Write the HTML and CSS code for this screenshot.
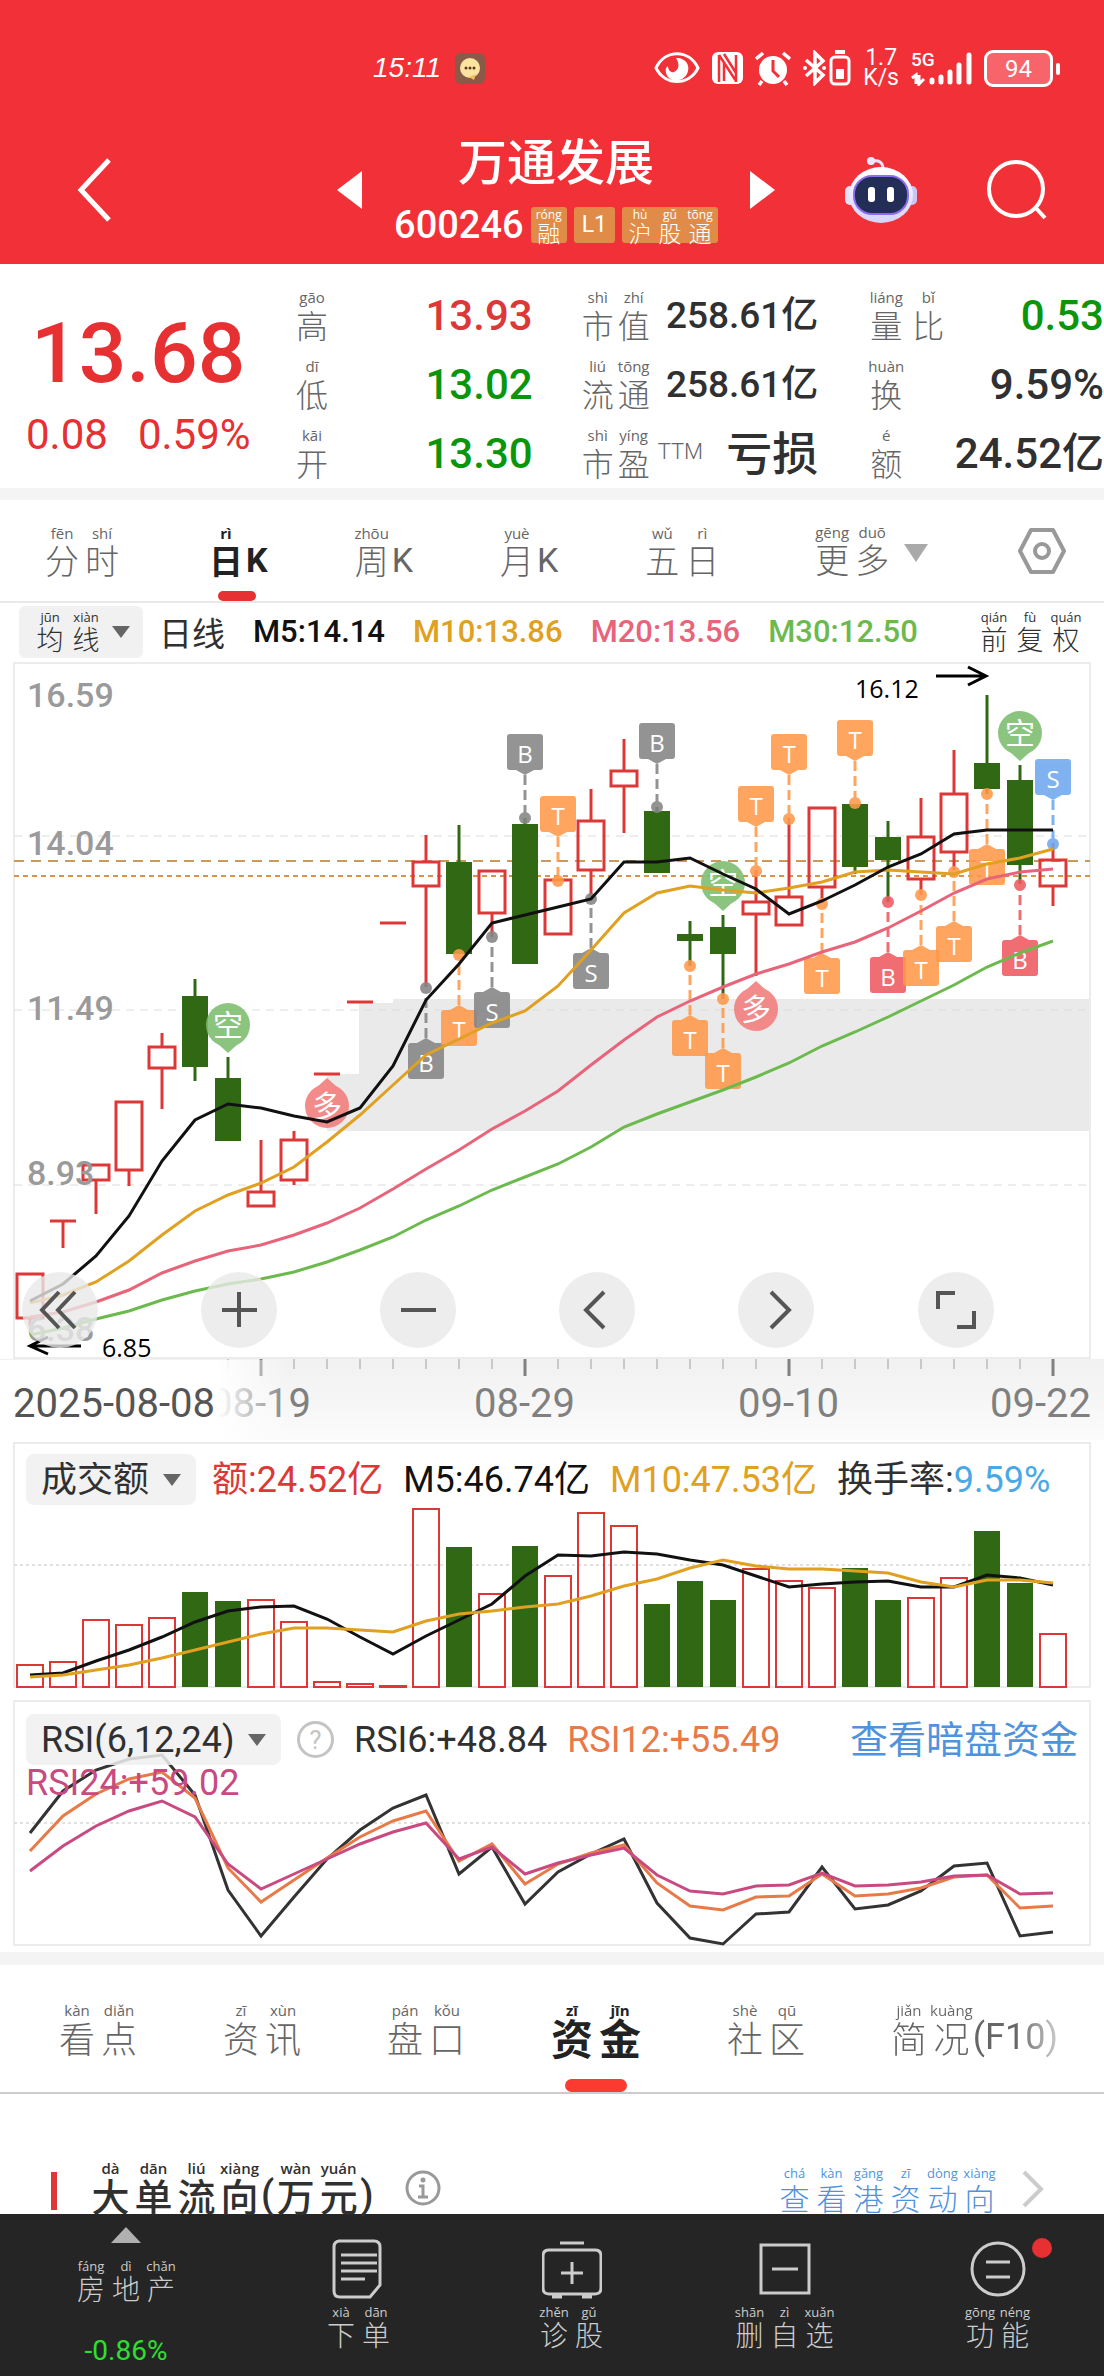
FILE: index.html
```html
<!DOCTYPE html>
<html lang="zh-CN">
<head>
    <meta charset="utf-8">
    <meta name="viewport" content="width=device-width, initial-scale=1">
    <title>万通发展 600246</title>
    <link rel="stylesheet" href="styles.css">
</head>
<body>
    <header class="top">
        <div class="status">
            <span class="time">15:11</span>
            <svg class="app-icon" width="30" height="31" viewBox="0 0 30 31">
                <rect width="30" height="31" rx="6" fill="#8a5a48"/>
                <circle cx="15" cy="15" r="10" fill="#fbe3a0"/>
                <path d="M14 24l7-3-2 6z" fill="#f0c060"/>
                <g fill="#5a3a20"><circle cx="11" cy="15" r="1.5"/><circle cx="15" cy="15" r="1.5"/><circle cx="19" cy="15" r="1.5"/></g>
            </svg>
            <div class="status-icons">
                <svg width="46" height="34" viewBox="0 0 46 34">
                    <path d="M2 17C11 -2 35 -2 44 17C35 35 11 35 2 17Z" fill="none" stroke="#fff" stroke-width="3"/>
                    <path d="M22 7c8-1 14 6 12 13-2 11-19 13-22 2-1-3 0-6 2-7 0 4 3 7 6 6 5-2 6-8 2-14z" fill="#fff"/>
                </svg>
                <svg width="31" height="34" viewBox="0 0 31 34">
                    <rect y="1" width="31" height="32" rx="6" fill="#fff"/>
                    <path d="M7 4v27M7 4l17 26M12 11v19M24 4v27M12 3l12 19" fill="none" stroke="#f23037" stroke-width="2.5"/>
                </svg>
                <svg width="36" height="35" viewBox="0 0 36 35">
                    <circle cx="18" cy="19" r="14" fill="#fff"/>
                    <path d="M1 8l7-6M28 2l7 6M7 30l-3 4M29 30l3 4" stroke="#fff" stroke-width="3.5" fill="none"/>
                    <path d="M18 9v11l6 6" stroke="#f23037" stroke-width="3" fill="none"/>
                </svg>
                <svg width="48" height="36" viewBox="0 0 48 36">
                    <path d="M3 10l17 15-8 8V3l8 8L3 26" fill="none" stroke="#fff" stroke-width="3.5"/>
                    <circle cx="2" cy="18" r="2" fill="#fff"/><circle cx="21" cy="18" r="2" fill="#fff"/>
                    <path d="M32 2h10" stroke="#fff" stroke-width="4"/>
                    <rect x="28" y="7" width="18" height="27" rx="4" fill="none" stroke="#fff" stroke-width="3"/>
                    <rect x="33" y="19" width="8" height="10" rx="1" fill="#fff"/>
                </svg>
                <span class="speed">1.7<br>K/s</span>
                <div class="signal">
                    <span>5G</span>
                    <svg width="61" height="36" viewBox="0 0 61 36">
                        <path d="M1 28l4-3v9M8 25v9l5-5" fill="none" stroke="#fff" stroke-width="3"/>
                        <path d="M21 30v2M30 27v5M39 22v10M48 15v17M58 5v27" stroke="#fff" stroke-width="5" stroke-linecap="round"/>
                    </svg>
                </div>
                <span class="battery">94</span>
            </div>
        </div>
        <div class="nav">
            <button class="icon-btn back" aria-label="返回">
                <svg width="35" height="66" viewBox="0 0 35 66"><path d="M32 3L4 33l28 30" fill="none" stroke="#fff" stroke-width="5"/></svg>
            </button>
            <div class="stock">
                <button class="icon-btn" aria-label="上一只"><svg width="25" height="38" viewBox="0 0 25 38"><path d="M25 0v38L0 19z" fill="#fff"/></svg></button>
                <div class="stock-name">
                    <h1>万通发展</h1>
                    <div class="stock-code">
                        <span>600246</span>
                        <span class="tag"><ruby>融<rt>róng</rt></ruby></span>
                        <span class="tag level">L1</span>
                        <span class="tag"><ruby>沪<rt>hù</rt></ruby><ruby>股<rt>gǔ</rt></ruby><ruby>通<rt>tōng</rt></ruby></span>
                    </div>
                </div>
                <button class="icon-btn" aria-label="下一只"><svg width="25" height="38" viewBox="0 0 25 38"><path d="M0 0v38L25 19z" fill="#fff"/></svg></button>
            </div>
            <button class="icon-btn" aria-label="智能助手">
                <svg width="72" height="68" viewBox="0 0 72 68">
                    <defs><linearGradient id="shell" x1="0" y1="0" x2="0" y2="1"><stop offset="0" stop-color="#fff"/><stop offset="1" stop-color="#d5d3fa"/></linearGradient></defs>
                    <path d="M27 5c7-1 11 1 11 8" fill="none" stroke="#e6e0fa" stroke-width="3"/>
                    <circle cx="26" cy="5" r="4" fill="#eee8fc"/>
                    <rect x="0" y="30" width="12" height="19" rx="5" fill="#e3e0fb"/>
                    <rect x="60" y="30" width="12" height="19" rx="5" fill="#c9c8f5"/>
                    <ellipse cx="36" cy="39" rx="32" ry="28" fill="url(#shell)"/>
                    <rect x="9" y="20" width="54" height="38" rx="18" fill="#222e55" stroke="#8a6cf0" stroke-width="2"/>
                    <rect x="23" y="31" width="7" height="15" rx="3" fill="#fff"/><rect x="42" y="31" width="7" height="15" rx="3" fill="#fff"/>
                </svg>
            </button>
            <button class="icon-btn" aria-label="搜索">
                <svg width="60" height="60" viewBox="0 0 60 60"><circle cx="29" cy="29" r="27" fill="none" stroke="#fff" stroke-width="4"/><path d="M48 47l10 11" stroke="#fff" stroke-width="4"/></svg>
            </button>
        </div>
    </header>

    <section class="quote">
        <div class="price">
            <strong>13.68</strong>
            <p><span>0.08</span><span>0.59%</span></p>
        </div>
        <dl>
            <div><dt><ruby>高<rt>gāo</rt></ruby></dt><dd class="up">13.93</dd></div>
            <div><dt><ruby>低<rt>dī</rt></ruby></dt><dd class="down">13.02</dd></div>
            <div><dt><ruby>开<rt>kāi</rt></ruby></dt><dd class="down">13.30</dd></div>
        </dl>
        <dl class="cap">
            <div><dt><ruby>市<rt>shì</rt></ruby><ruby>值<rt>zhí</rt></ruby></dt><dd>258.61亿</dd></div>
            <div><dt><ruby>流<rt>liú</rt></ruby><ruby>通<rt>tōng</rt></ruby></dt><dd>258.61亿</dd></div>
            <div><dt><ruby>市<rt>shì</rt></ruby><ruby>盈<rt>yíng</rt></ruby><sup>TTM</sup></dt><dd class="loss">亏损</dd></div>
        </dl>
        <dl class="turnover">
            <div><dt><ruby>量<rt>liáng</rt></ruby><ruby>比<rt>bǐ</rt></ruby></dt><dd class="down">0.53</dd></div>
            <div><dt><ruby>换<rt>huàn</rt></ruby></dt><dd>9.59%</dd></div>
            <div><dt><ruby>额<rt>é</rt></ruby></dt><dd>24.52亿</dd></div>
        </dl>
    </section>

    <nav class="periods">
        <div class="period-list">
            <button><ruby>分<rt>fēn</rt></ruby><ruby>时<rt>shí</rt></ruby></button>
            <button class="active"><ruby>日<rt>rì</rt></ruby>K</button>
            <button><ruby>周<rt>zhōu</rt></ruby>K</button>
            <button><ruby>月<rt>yuè</rt></ruby>K</button>
            <button><ruby>五<rt>wǔ</rt></ruby><ruby>日<rt>rì</rt></ruby></button>
        </div>
        <button class="more"><ruby>更<rt>gēng</rt></ruby><ruby>多<rt>duō</rt></ruby><i class="caret"></i></button>
        <button aria-label="设置">
            <svg width="48" height="48" viewBox="0 0 48 48" fill="none" stroke="#999" stroke-width="4"><path d="M13 3h22l11 21-11 21H13L2 24z" stroke-linejoin="round"/><circle cx="24" cy="24" r="7"/></svg>
        </button>
    </nav>

    <div class="averages">
        <button class="chip"><ruby>均<rt>jūn</rt></ruby><ruby>线<rt>xiàn</rt></ruby><i class="caret"></i></button>
        <span class="line-name">日线</span>
        <span class="black">M5:14.14</span>
        <span class="gold">M10:13.86</span>
        <span class="pink">M20:13.56</span>
        <span class="green">M30:12.50</span>
        <button class="adjust"><ruby>前<rt>qián</rt></ruby><ruby>复<rt>fù</rt></ruby><ruby>权<rt>quán</rt></ruby></button>
    </div>

    <section class="panel">
        <svg id="kline" viewBox="0 660 1104 780" role="img" aria-label="日K线图"></svg>
        <div class="tools">
            <button aria-label="最早"><svg viewBox="0 0 76 76"><path d="M37 20L20 38l17 18M53 20L36 38l17 18"/></svg></button>
            <button aria-label="放大"><svg viewBox="0 0 76 76"><path d="M21 38h35M38 20v35"/></svg></button>
            <button aria-label="缩小"><svg viewBox="0 0 76 76"><path d="M21 38h35"/></svg></button>
            <button aria-label="向左"><svg viewBox="0 0 76 76"><path d="M45 20L27 38l18 18"/></svg></button>
            <button aria-label="向右"><svg viewBox="0 0 76 76"><path d="M33 20l18 18-18 18"/></svg></button>
            <button aria-label="全屏"><svg viewBox="0 0 76 76"><path d="M20 37V21h17M56 39v16H39"/></svg></button>
        </div>
    </section>

    <section class="panel">
        <svg id="volume" viewBox="0 1440 1104 260" role="img" aria-label="成交额"></svg>
        <div class="legend">
            <span class="picker"><select aria-label="指标"><option>成交额</option></select><i class="caret"></i></span>
            <span class="red">额:24.52亿</span>
            <span class="black">M5:46.74亿</span>
            <span class="gold">M10:47.53亿</span>
            <span>换手率:<b>9.59%</b></span>
        </div>
    </section>

    <section class="panel">
        <svg id="rsi" viewBox="0 1700 1104 252" role="img" aria-label="RSI"></svg>
        <div class="legend">
            <span class="picker"><select aria-label="指标"><option>RSI(6,12,24)</option></select><i class="caret"></i></span>
            <button class="help" aria-label="说明">?</button>
            <span>RSI6:+48.84</span>
            <span class="orange">RSI12:+55.49</span>
            <a href="#">查看暗盘资金</a>
            <span class="purple">RSI24:+59.02</span>
        </div>
    </section>

    <nav class="tabs">
        <button><ruby>看<rt>kàn</rt></ruby><ruby>点<rt>diǎn</rt></ruby></button>
        <button><ruby>资<rt>zī</rt></ruby><ruby>讯<rt>xùn</rt></ruby></button>
        <button><ruby>盘<rt>pán</rt></ruby><ruby>口<rt>kǒu</rt></ruby></button>
        <button class="active"><ruby>资<rt>zī</rt></ruby><ruby>金<rt>jīn</rt></ruby></button>
        <button><ruby>社<rt>shè</rt></ruby><ruby>区<rt>qū</rt></ruby></button>
        <button class="faded"><ruby>简<rt>jiǎn</rt></ruby><ruby>况<rt>kuàng</rt></ruby>(F10)</button>
    </nav>

    <section class="flow">
        <h2><ruby>大<rt>dà</rt></ruby><ruby>单<rt>dān</rt></ruby><ruby>流<rt>liú</rt></ruby><ruby>向<rt>xiàng</rt></ruby>(<ruby>万<rt>wàn</rt></ruby><ruby>元<rt>yuán</rt></ruby>)</h2>
        <button class="info" aria-label="说明">
            <svg width="36" height="36" viewBox="0 0 36 36"><circle cx="18" cy="18" r="16" fill="none" stroke="#999" stroke-width="3"/><circle cx="18" cy="10" r="2.5" fill="#999"/><path d="M14 16h4v11M13 27h10" fill="none" stroke="#999" stroke-width="3"/></svg>
        </button>
        <a href="#"><ruby>查<rt>chá</rt></ruby><ruby>看<rt>kàn</rt></ruby><ruby>港<rt>gǎng</rt></ruby><ruby>资<rt>zī</rt></ruby><ruby>动<rt>dòng</rt></ruby><ruby>向<rt>xiàng</rt></ruby>
            <svg width="22" height="38" viewBox="0 0 22 38"><path d="M2 2l17 17L2 36" fill="none" stroke="#ccc" stroke-width="4"/></svg>
        </a>
    </section>

    <footer class="bottom">
        <button class="sector">
            <i class="caret"></i>
            <span class="name"><ruby>房<rt>fáng</rt></ruby><ruby>地<rt>dì</rt></ruby><ruby>产<rt>chǎn</rt></ruby></span>
            <em>-0.86%</em>
        </button>
        <button>
            <svg width="60" height="60" viewBox="0 0 60 60"><path d="M9 2h36q6 0 6 6v38L41 58H11q-6 0-6-6V8q0-6 6-6zM12 16h36M12 24h36M12 32h36M12 40h24"/></svg>
            <span class="name"><ruby>下<rt>xià</rt></ruby><ruby>单<rt>dān</rt></ruby></span>
        </button>
        <button>
            <svg width="60" height="60" viewBox="0 0 60 60"><path d="M18 4h24M7 11h46q6 0 6 6v32q0 6-6 6H7q-6 0-6-6V17q0-6 6-6zM30 23v22M19 34h22M10 58h10M40 58h10"/></svg>
            <span class="name"><ruby>诊<rt>zhěn</rt></ruby><ruby>股<rt>gǔ</rt></ruby></span>
        </button>
        <button>
            <svg width="60" height="60" viewBox="0 0 60 60"><path d="M6 6h48v48H6zM17 30h26"/></svg>
            <span class="name"><ruby>删<rt>shān</rt></ruby><ruby>自<rt>zì</rt></ruby><ruby>选<rt>xuǎn</rt></ruby></span>
        </button>
        <button>
            <span class="dotted"><svg width="60" height="60" viewBox="0 0 60 60"><circle cx="30" cy="30" r="26"/><path d="M18 23h24M18 38h24"/></svg></span>
            <span class="name"><ruby>功<rt>gōng</rt></ruby><ruby>能<rt>néng</rt></ruby></span>
        </button>
    </footer>

    <script src="chart.js"></script>
</body>
</html>
```
FILE: styles.css
```css
* {
    margin: 0;
    padding: 0;
    box-sizing: border-box;
}
body {
    background: #fff;
    color: #303030;
    font-family: Roboto, "Noto Sans CJK SC", sans-serif;
    overflow-x: hidden;
}
button {
    border: 0;
    background: none;
    color: inherit;
    font: inherit;
    cursor: pointer;
}
a {
    color: #4f93de;
    text-decoration: none;
}
svg {
    display: block;
}

/* characters with pinyin above */
ruby {
    display: flex;
    flex-direction: column-reverse;
    align-items: center;
    min-width: 42px;
    line-height: 38px;
    font-family: "Noto Sans CJK SC", sans-serif;
    font-weight: 300;
}
rt {
    display: block;
    font-family: "Open Sans", "Noto Sans", sans-serif;
    font-size: 15px;
    font-weight: 400;
    line-height: 16px;
    white-space: nowrap;
}
.caret {
    display: inline-block;
    border: 9px solid transparent;
    border-top: 12px solid #666;
    border-bottom: 0;
}

/* header */
.top {
    background: #f23037;
    color: #fff;
    height: 264px;
}
.status {
    display: flex;
    align-items: center;
    height: 98px;
    padding: 38px 44px 0 373px;
}
.time {
    font: italic 28px "Liberation Sans", sans-serif;
}
.app-icon {
    margin-left: 14px;
}
.status-icons {
    display: flex;
    align-items: center;
    gap: 12px;
    margin-left: auto;
}
.speed {
    font-size: 23px;
    line-height: 20px;
    text-align: center;
}
.signal {
    position: relative;
}
.signal span {
    position: absolute;
    top: 0;
    left: 0;
    font-size: 19px;
    line-height: 20px;
    font-weight: 500;
}
.battery {
    position: relative;
    width: 69px;
    height: 37px;
    margin-right: 7px;
    border: 3px solid #fff;
    border-radius: 9px;
    background: #f7656a;
    font-size: 24px;
    line-height: 33px;
    text-align: center;
}
.battery::after {
    content: "";
    position: absolute;
    top: 10px;
    right: -10px;
    width: 4px;
    height: 12px;
    border-radius: 2px;
    background: #fff;
}
.nav {
    display: flex;
    align-items: center;
    gap: 70px;
    height: 166px;
    padding: 18px 57px 0 77px;
}
.back {
    margin-right: auto;
}
.stock {
    display: flex;
    align-items: center;
    gap: 32px;
}
.stock-name {
    text-align: center;
}
.stock h1 {
    font-size: 49px;
    font-weight: 500;
    line-height: 66px;
}
.stock-code {
    display: flex;
    align-items: center;
    gap: 7px;
    padding-top: 4px;
    font-size: 38px;
    font-weight: 500;
    line-height: 48px;
}
.tag {
    display: flex;
    height: 36px;
    padding: 0 3px;
    border-radius: 3px;
    background: #e08c48;
    font-size: 23px;
    line-height: 36px;
    font-weight: 400;
}
.tag ruby {
    min-width: 30px;
    line-height: 22px;
}
.tag rt {
    font-size: 12px;
    line-height: 13px;
}
.level {
    padding: 0 8px;
}

/* quote */
.quote {
    display: grid;
    grid-template-columns: 221px 1fr 1fr 1fr;
    column-gap: 47px;
    padding: 17px 0 0 26px;
    border-bottom: 12px solid #f4f4f4;
}
.price {
    width: max-content;
    color: #e63031;
    text-align: center;
}
.price strong {
    display: block;
    padding-top: 24px;
    font-size: 84px;
    line-height: 98px;
    font-weight: 500;
}
.price p {
    display: flex;
    gap: 30px;
    font-size: 42px;
    line-height: 64px;
}
.quote dl div {
    display: flex;
    align-items: center;
    justify-content: space-between;
    height: 69px;
}
.quote dt {
    display: flex;
    color: #666;
    font-size: 32px;
}
.quote dd {
    font-size: 42px;
    font-weight: 500;
    line-height: 48px;
    white-space: nowrap;
}
.quote dl ruby {
    min-width: 36px;
    line-height: 38px;
}
.quote .turnover ruby {
    min-width: 42px;
}
.quote .cap dd {
    font-size: 37px;
}
.quote .cap .loss {
    font-size: 46px;
}
.quote sup {
    padding-left: 6px;
    font-size: 22px;
    line-height: 50px;
    font-weight: 300;
}
.up {
    color: #dc3838;
}
.down {
    color: #0b950b;
}

/* period tabs */
.periods {
    display: flex;
    justify-content: space-between;
    align-items: center;
    height: 103px;
    padding: 0 38px 0 42px;
    border-bottom: 2px solid #e8e8e8;
    color: #666;
    font-size: 34px;
}
.periods button, .tabs button {
    display: flex;
    align-items: flex-end;
    line-height: 38px;
}
.period-list {
    display: flex;
    align-self: stretch;
    align-items: center;
    gap: 84px;
}
.period-list button {
    height: 100%;
    padding-bottom: 22px;
}
.periods ruby {
    min-width: 40px;
}
.periods .active, .tabs .active {
    position: relative;
    color: #222;
    font-weight: 700;
}
.periods .active ruby, .tabs .active ruby, .active rt {
    font-weight: 700;
}
.periods .active::after, .tabs .active::after {
    content: "";
    position: absolute;
    left: 50%;
    bottom: 0;
    width: 38px;
    height: 10px;
    margin-left: -19px;
    border-radius: 5px;
    background: #e63031;
}
.more .caret {
    margin: 0 0 16px 12px;
    border-width: 18px 12px 0;
    border-top-color: #aaa;
}

/* moving averages */
.averages {
    display: flex;
    align-items: center;
    gap: 28px;
    height: 57px;
    padding: 0 20px 0 19px;
    font-size: 31px;
    font-weight: 500;
    white-space: nowrap;
}
.chip {
    display: flex;
    align-items: center;
    height: 52px;
    padding: 0 13px;
    border-radius: 6px;
    background: #f1f1f1;
}
.averages ruby {
    min-width: 36px;
    font-size: 27px;
    line-height: 30px;
}
.averages rt {
    font-size: 13px;
    line-height: 14px;
}
.chip .caret {
    margin-left: 8px;
}
.line-name {
    margin-left: -12px;
    font-size: 33px;
    font-weight: 400;
}
.adjust {
    display: flex;
    margin-left: auto;
}
.black { color: #111; }
.gold { color: #e0a020; }
.pink { color: #e8647a; }
.green { color: #6cba4e; }
.red { color: #dc3838; }
.orange { color: #e87a48; }
.purple { color: #c94a80; }

/* chart panels */
.panel {
    position: relative;
}
.panel > svg {
    width: 100%;
}
.axis-label {
    font-size: 34px;
    font-weight: 500;
    fill: #9a9a9a;
}
.date {
    font-size: 40px;
    fill: #808080;
}
.date.first {
    fill: #555;
}
.extreme {
    font-family: "Open Sans", sans-serif;
    font-size: 25px;
    fill: #000;
}
.mark {
    font-family: "Open Sans", sans-serif;
    font-size: 24px;
    fill: #fff;
    text-anchor: middle;
}
.mark.round {
    font-family: "Noto Sans CJK SC", sans-serif;
    font-size: 30px;
}
.tools {
    position: absolute;
    left: 2%;
    right: 10%;
    bottom: 92px;
    display: flex;
    justify-content: space-between;
}
.tools button {
    width: 76px;
    height: 76px;
    border-radius: 50%;
    background: rgba(232, 232, 232, 0.8);
}
.tools path {
    fill: none;
    stroke: #555;
    stroke-width: 4;
}
.legend {
    position: absolute;
    top: 14px;
    left: 26px;
    right: 26px;
    display: flex;
    flex-wrap: wrap;
    align-items: center;
    column-gap: 20px;
    font-size: 36px;
    line-height: 36px;
}
.legend b {
    color: #4aa8e4;
    font-weight: 400;
}
.legend a {
    margin-left: auto;
    font-size: 38px;
}
.picker {
    position: relative;
    margin-right: -4px;
}
.picker select {
    display: block;
    height: 51px;
    padding: 0 46px 0 15px;
    border: 0;
    border-radius: 8px;
    background: rgba(240, 240, 240, 0.85);
    color: inherit;
    font: inherit;
    appearance: none;
}
.picker .caret {
    position: absolute;
    top: 20px;
    right: 15px;
    pointer-events: none;
}
.help {
    width: 37px;
    height: 37px;
    border: 3px solid #c4c4c4;
    border-radius: 50%;
    color: #c4c4c4;
    font-size: 26px;
    line-height: 30px;
}

/* content tabs */
.tabs {
    display: flex;
    gap: 80px;
    height: 142px;
    padding-left: 56px;
    border-top: 13px solid #f4f4f4;
    border-bottom: 2px solid #ccc;
    color: #666;
    font-size: 36px;
    white-space: nowrap;
}
.tabs button {
    padding-bottom: 36px;
}
.tabs .active ruby {
    font-size: 42px;
    min-width: 48px;
}
.tabs .active::after {
    width: 62px;
    height: 13px;
    margin-left: -31px;
    border-radius: 7px;
    background: #fb3a30;
}
.tabs .faded {
    background: linear-gradient(90deg, #666 75%, #ccc);
    background-clip: text;
    color: transparent;
}

/* money flow */
.flow {
    display: flex;
    align-items: flex-end;
    height: 120px;
    padding: 0 60px 0 51px;
}
.flow h2 {
    display: flex;
    align-items: flex-end;
    padding-left: 38px;
    font-size: 38px;
    font-weight: 500;
    line-height: 38px;
    background: linear-gradient(#dc3838, #dc3838) 0 12px / 6px 38px no-repeat;
}
.flow h2 ruby {
    min-width: 43px;
    font-weight: 500;
}
.flow h2 rt {
    font-weight: 600;
}
.info {
    padding: 0 0 8px 32px;
}
.flow a {
    display: flex;
    align-items: flex-end;
    margin-left: auto;
    font-size: 30px;
}
.flow a ruby {
    min-width: 37px;
    line-height: 34px;
}
.flow a rt {
    font-size: 13px;
    line-height: 14px;
}
.flow a svg {
    margin: 0 0 6px 24px;
}

/* bottom bar */
.bottom {
    display: grid;
    grid-template-columns: 252fr 213fr 213fr 213fr 213fr;
    height: 162px;
    background: #252525;
    color: #ccc;
    font-size: 28px;
}
.bottom button {
    display: flex;
    flex-direction: column;
    align-items: center;
    padding-top: 25px;
}
.bottom svg {
    fill: none;
    stroke: #ccc;
    stroke-width: 3;
}
.bottom .name {
    display: flex;
    padding-top: 6px;
}
.bottom ruby {
    min-width: 35px;
    line-height: 31px;
}
.bottom rt {
    font-size: 13px;
    line-height: 14px;
}
.bottom .sector {
    padding-top: 13px;
}
.sector .caret {
    margin-bottom: 10px;
    border: 15px solid transparent;
    border-top: 0;
    border-bottom: 16px solid #b0b0b0;
}
.sector em {
    margin-top: 30px;
    color: #2ee02e;
    font-style: normal;
    line-height: 34px;
}
.dotted {
    position: relative;
}
.dotted::after {
    content: "";
    position: absolute;
    top: -1px;
    right: -24px;
    width: 20px;
    height: 20px;
    border-radius: 50%;
    background: #e63031;
}
```
FILE: chart.js
```js
const UP = "#dc3838";
const DOWN = "#306814";
const BLACK = "#111";
const GOLD = "#e0a020";
const x = i => 30 + 33 * i;

// high, body top, body bottom, low; 1 = closed lower
const candles = [
    [1274, 1274, 1318, 1326, 0], [1221, 1221, 1221, 1248, 0], [1165, 1165, 1180, 1214, 0], [1102, 1102, 1170, 1186, 0],
    [1033, 1047, 1068, 1109, 0], [979, 996, 1067, 1081, 1], [1057, 1078, 1141, 1141, 1], [1140, 1192, 1206, 1206, 0],
    [1131, 1140, 1180, 1185, 0], [1074, 1074, 1074, 1074, 0], [1002, 1002, 1002, 1002, 0], [923, 923, 923, 923, 0],
    [835, 862, 886, 987, 0], [825, 862, 954, 954, 1], [871, 871, 913, 937, 0], [818, 824, 964, 964, 1],
    [880, 880, 934, 934, 0], [789, 821, 870, 898, 0], [739, 771, 786, 833, 0], [807, 811, 873, 873, 1],
    [921, 934, 941, 966, 1], [915, 927, 954, 999, 1], [870, 902, 914, 976, 0], [818, 897, 925, 925, 0],
    [808, 808, 887, 903, 0], [804, 804, 867, 874, 1], [821, 837, 860, 902, 1], [798, 837, 879, 895, 0],
    [750, 794, 852, 870, 0], [695, 763, 789, 794, 1], [765, 780, 865, 884, 1], [843, 860, 886, 906, 0]
];
const ma5 = [1301, 1284, 1256, 1216, 1161, 1120, 1104, 1108, 1116, 1122, 1108, 1066, 1000, 964, 923, 915, 907, 899, 862, 862, 858, 874, 889, 914, 901, 885, 867, 854, 834, 830, 830, 830];
const ma10 = [1303, 1295, 1282, 1261, 1235, 1211, 1195, 1183, 1167, 1142, 1115, 1085, 1055, 1039, 1023, 1011, 986, 950, 913, 893, 886, 890, 893, 888, 882, 872, 870, 872, 874, 864, 858, 849];
const ma20 = [1317, 1312, 1302, 1290, 1273, 1261, 1251, 1245, 1235, 1223, 1208, 1189, 1169, 1150, 1129, 1111, 1091, 1065, 1040, 1017, 1001, 987, 974, 964, 952, 942, 928, 911, 893, 879, 872, 869];
const ma30 = [1335, 1328, 1319, 1311, 1300, 1291, 1284, 1279, 1272, 1262, 1250, 1237, 1220, 1206, 1190, 1177, 1164, 1147, 1127, 1114, 1102, 1090, 1077, 1063, 1046, 1032, 1017, 1001, 985, 967, 953, 941];

// index, letter, color, box top, dot
const GRAY = "#858585", ORANGE = "#ff994a", RED = "#ee5a60", BLUE = "#6fa8f0";
const marks = [
    [12, "B", GRAY, 1043, 988], [13, "T", ORANGE, 1010, 955], [14, "S", GRAY, 992, 937], [15, "B", GRAY, 734, 818],
    [16, "T", ORANGE, 796, 881], [17, "S", GRAY, 953, 899], [19, "B", GRAY, 723, 807], [20, "T", ORANGE, 1020, 966],
    [21, "T", ORANGE, 1053, 999], [22, "T", ORANGE, 786, 871], [23, "T", ORANGE, 734, 819], [24, "T", ORANGE, 958, 904],
    [25, "T", ORANGE, 720, 803], [26, "B", RED, 957, 902], [27, "T", ORANGE, 950, 895], [28, "T", ORANGE, 926, 872],
    [29, "T", ORANGE, 849, 794], [30, "B", RED, 940, 885], [31, "S", BLUE, 759, 844]
];
const rounds = [[6, "空", 1025], [9, "多", 1106], [21, "空", 883], [22, "多", 1009], [30, "空", 733]];

function line(ys, color, width = 3) {
    const points = ys.map((y, i) => x(i) + "," + y).join(" ");
    return `<polyline points="${points}" fill="none" stroke="${color}" stroke-width="${width}"/>`;
}

function seg(x1, y1, x2, y2, color, width, dash = "none") {
    return `<line x1="${x1}" y1="${y1}" x2="${x2}" y2="${y2}" stroke="${color}" stroke-width="${width}" stroke-dasharray="${dash}"/>`;
}

function candle([high, top, bottom, low, down], i) {
    const color = down ? DOWN : UP;
    let out = seg(x(i), high, x(i), top, color, 3) + seg(x(i), bottom, x(i), low, color, 3);
    if (top === bottom) {
        out += seg(x(i) - 13, top, x(i) + 13, top, color, 3);
    } else {
        out += `<rect x="${x(i) - 13}" y="${top}" width="26" height="${bottom - top}" fill="${down ? DOWN : "none"}" stroke="${down ? "none" : UP}" stroke-width="3"/>`;
    }
    return out;
}

function mark([i, letter, color, top, dot]) {
    const above = top < dot;
    const edge = above ? top + 36 : top;
    const tip = above ? edge + 5 : edge - 5;
    return `<g opacity="0.88">${seg(x(i), tip, x(i), dot, color, 3, "10 5")}
        <circle cx="${x(i)}" cy="${dot}" r="6" fill="${color}"/>
        <rect x="${x(i) - 18}" y="${top}" width="36" height="36" rx="3" fill="${color}"/>
        <path d="M${x(i) - 9} ${edge}L${x(i)} ${tip}L${x(i) + 9} ${edge}z" fill="${color}"/></g>
        <text class="mark" x="${x(i)}" y="${top + 29}">${letter}</text>`;
}

function round([i, word, cy]) {
    const short = word === "空";
    const color = short ? "#7cbd6e" : "#f27c7c";
    const d = short ? 1 : -1;
    return `<g opacity="0.88"><circle cx="${x(i)}" cy="${cy}" r="22" fill="${color}"/>
        <path d="M${x(i) - 10} ${cy + 19 * d}L${x(i)} ${cy + 28 * d}L${x(i) + 10} ${cy + 19 * d}z" fill="${color}"/></g>
        <text class="mark round" x="${x(i)}" y="${cy + 11}">${word}</text>`;
}

function drawKline() {
    let out = `<defs>
        <linearGradient id="axis" x1="0" y1="0" x2="0" y2="1"><stop offset="0" stop-color="#f1f1f1"/><stop offset="1" stop-color="#fbfbfb"/></linearGradient>
        <linearGradient id="fade"><stop offset="0.75" stop-color="#fff"/><stop offset="1" stop-color="#fff" stop-opacity="0"/></linearGradient></defs>
        <path d="M327 1131V1074H359V1003H393V999H1091V1131z" fill="#eaeaea"/>
        <rect x="0" y="1359" width="1104" height="81" fill="url(#axis)"/>
        <rect x="14" y="663" width="1076" height="695" fill="none" stroke="#ececec" stroke-width="2"/>`;
    [836, 1010, 1185].forEach(y => out += seg(14, y, 1090, y, "#dcdcdc", 1, "8 6"));
    out += seg(14, 861, 1090, 861, "#c99a5c", 2, "10 7") + seg(14, 876, 1090, 876, "#d9944a", 2, "5 4");
    out += candles.map(candle).join("");
    [["16.59", 707], ["14.04", 855], ["11.49", 1020], ["8.93", 1185], ["6.38", 1341]].forEach(([label, y]) => {
        out += `<text class="axis-label" x="27" y="${y}">${label}</text>`;
    });
    out += rounds.map(round).join("") + marks.map(mark).join("");
    out += line(ma30, "#6cba4e") + line(ma20, "#e8647a") + line(ma10, GOLD) + line(ma5, BLACK);

    // highest and lowest price
    out += `<g fill="none" stroke="#000" stroke-width="3"><path d="M936 676h50M968 667l18 9-18 9"/><path d="M81 1346H30M48 1337l-18 9 18 8"/></g>
        <text class="extreme" x="855" y="698">16.12</text><text class="extreme" x="102" y="1357">6.85</text>`;

    for (let i = 6; i < 32; i++) {
        const major = i % 8 === 7;
        out += seg(x(i), 1359, x(i), major ? 1376 : 1369, major ? "#808080" : "#c8c8c8", major ? 3 : 2);
    }
    [["08-19", 210], ["08-29", 474], ["09-10", 738], ["09-22", 990]].forEach(([label, left]) => {
        out += `<text class="date" x="${left}" y="1417">${label}</text>`;
    });
    out += `<rect x="0" y="1360" width="290" height="80" fill="url(#fade)"/>
        <text class="date first" x="13" y="1417">2025-08-08</text>`;
    document.getElementById("kline").innerHTML = out;
}

const volumeTop = [1665, 1662, 1620, 1625, 1618, 1592, 1601, 1600, 1622, 1682, 1684, 1686, 1509, 1547, 1594, 1546, 1576, 1513, 1526, 1604, 1581, 1600, 1569, 1581, 1588, 1568, 1600, 1598, 1578, 1531, 1583, 1634];
const volume5 = [1675, 1673, 1661, 1650, 1637, 1622, 1611, 1607, 1606, 1619, 1637, 1654, 1636, 1620, 1604, 1576, 1555, 1556, 1552, 1554, 1560, 1565, 1576, 1587, 1584, 1582, 1581, 1587, 1587, 1575, 1578, 1585];
const volume10 = [1677, 1675, 1670, 1665, 1658, 1650, 1642, 1634, 1628, 1628, 1630, 1632, 1621, 1614, 1611, 1607, 1604, 1596, 1586, 1579, 1568, 1560, 1566, 1569, 1569, 1571, 1573, 1582, 1587, 1580, 1580, 1583];

function drawVolume() {
    let out = `<rect x="14" y="1443" width="1076" height="244" fill="#fff" stroke="#ececec" stroke-width="2"/>`;
    out += seg(14, 1565, 1090, 1565, "#e0e0e0", 2, "3 3");
    volumeTop.forEach((top, i) => {
        const down = candles[i][4];
        out += `<rect x="${x(i) - 13}" y="${top}" width="26" height="${1687 - top}" fill="${down ? DOWN : "none"}" stroke="${down ? "none" : UP}" stroke-width="2"/>`;
    });
    out += line(volume5, BLACK) + line(volume10, GOLD);
    document.getElementById("volume").innerHTML = out;
}

const rsi6 = [1833, 1791, 1770, 1759, 1755, 1795, 1890, 1936, 1897, 1859, 1830, 1808, 1795, 1874, 1847, 1904, 1872, 1854, 1839, 1903, 1938, 1944, 1914, 1912, 1867, 1909, 1905, 1891, 1866, 1863, 1936, 1932];
const rsi12 = [1851, 1816, 1794, 1779, 1772, 1798, 1868, 1902, 1880, 1858, 1837, 1821, 1811, 1861, 1844, 1884, 1864, 1853, 1845, 1883, 1906, 1910, 1897, 1896, 1874, 1896, 1894, 1888, 1877, 1875, 1908, 1906];
const rsi24 = [1871, 1846, 1826, 1811, 1801, 1817, 1864, 1889, 1874, 1859, 1844, 1832, 1823, 1859, 1847, 1874, 1863, 1855, 1848, 1875, 1891, 1894, 1886, 1885, 1873, 1886, 1885, 1882, 1876, 1875, 1894, 1893];

function drawRsi() {
    document.getElementById("rsi").innerHTML =
        `<rect x="14" y="1701" width="1076" height="244" fill="none" stroke="#ececec" stroke-width="2"/>` +
        seg(14, 1823, 1090, 1823, "#e0e0e0", 2, "3 3") +
        line(rsi6, "#333") + line(rsi12, "#e87a48") + line(rsi24, "#c94a80");
}

drawKline();
drawVolume();
drawRsi();
```
